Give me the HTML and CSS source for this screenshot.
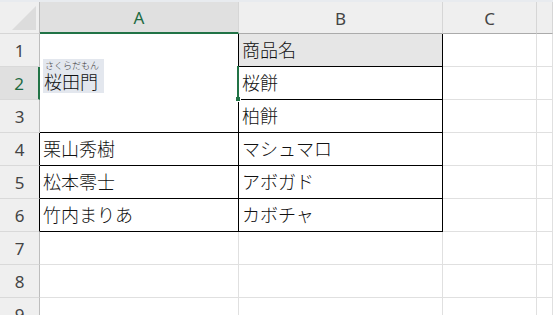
FILE: index.html
```html
<!DOCTYPE html>
<html lang="ja">
<head>
    <meta charset="UTF-8">
    <title>Sheet1</title>
    <link rel="stylesheet" href="styles.css">
</head>
<body>
    <div class="top-edge"></div>
    <div class="sheet">
        <!-- column headers -->
        <div class="corner">
            <svg width="39" height="31" viewBox="0 0 39 31"><polygon points="12,28 36,4 36,28" fill="#dcdcdc"/></svg>
        </div>
        <div class="col-head active">A</div>
        <div class="col-head">B</div>
        <div class="col-head">C</div>
        <div class="col-head"></div>

        <!-- row 1 -->
        <div class="row-head">1</div>
        <div class="cell merged">
            <div class="ruby-box">
                <span class="ruby">さくらだもん</span>
                <span class="base">桜田門</span>
            </div>
            <div class="sel-line"></div>
            <div class="fill-handle"></div>
        </div>
        <div class="cell boxed title">商品名</div>
        <div class="cell"></div>
        <div class="cell"></div>

        <!-- row 2 -->
        <div class="row-head active">2</div>
        <div class="cell boxed">桜餅</div>
        <div class="cell"></div>
        <div class="cell"></div>

        <!-- row 3 -->
        <div class="row-head">3</div>
        <div class="cell boxed">柏餅</div>
        <div class="cell"></div>
        <div class="cell"></div>

        <!-- row 4 -->
        <div class="row-head edge">4</div>
        <div class="cell boxed">栗山秀樹</div>
        <div class="cell boxed">マシュマロ</div>
        <div class="cell"></div>
        <div class="cell"></div>

        <!-- row 5 -->
        <div class="row-head edge">5</div>
        <div class="cell boxed">松本零士</div>
        <div class="cell boxed">アボガド</div>
        <div class="cell"></div>
        <div class="cell"></div>

        <!-- row 6 -->
        <div class="row-head edge">6</div>
        <div class="cell boxed">竹内まりあ</div>
        <div class="cell boxed">カボチャ</div>
        <div class="cell"></div>
        <div class="cell"></div>

        <!-- empty rows -->
        <div class="row-head">7</div>
        <div class="cell"></div><div class="cell"></div><div class="cell"></div><div class="cell"></div>
        <div class="row-head">8</div>
        <div class="cell"></div><div class="cell"></div><div class="cell"></div><div class="cell"></div>
        <div class="row-head">9</div>
        <div class="cell"></div><div class="cell"></div><div class="cell"></div><div class="cell"></div>
    </div>
</body>
</html>
```

FILE: styles.css
```css
* {
    margin: 0;
    padding: 0;
    box-sizing: border-box;
}
body {
    width: 553px;
    height: 315px;
    overflow: hidden;
    background: #fff;
    font-family: "Noto Sans CJK JP", "Noto Sans", sans-serif;
}

.top-edge {
    height: 2px;
    background: #e8ebef;
}

/* Grid */
.sheet {
    display: grid;
    grid-template-columns: 40px 199px 204px 94px 1fr;
    grid-template-rows: 32px repeat(9, 33px);
    height: 313px;
    overflow: hidden;
}

/* Headers */
.corner {
    background: #efefef;
    border-right: 1px solid #bdbdbd;
    border-bottom: 1px solid #d6d6d6;
}
.corner svg {
    display: block;
}
.col-head {
    display: flex;
    align-items: center;
    justify-content: center;
    background: #efefef;
    border-right: 1px solid #d6d6d6;
    border-bottom: 1px solid #ababab;
    font-family: "Noto Sans", sans-serif;
    font-size: 17px;
    color: #444;
    padding-top: 1px;
}
.col-head.active {
    background: #e0e0e0;
    color: #1e6b43;
    border-bottom: 2px solid #217346;
}
.row-head {
    display: flex;
    align-items: center;
    justify-content: center;
    background: #efefef;
    border-right: 1px solid #bdbdbd;
    border-bottom: 1px solid #d9d9d9;
    font-family: "Noto Sans", sans-serif;
    font-size: 17px;
    color: #444;
}
.row-head.active {
    background: #e0e0e0;
    color: #1e6b43;
    border-right: 2px solid #217346;
}
.row-head.edge {
    border-right-color: #000;
}

/* Cells */
.cell {
    display: flex;
    align-items: center;
    padding: 0 0 2px 3px;
    border-right: 1px solid #e0e0e0;
    border-bottom: 1px solid #e0e0e0;
    font-size: 18px;
    font-weight: 300;
    color: #111;
    white-space: nowrap;
}
.cell.boxed {
    border-right-color: #000;
    border-bottom-color: #000;
}
.cell.title {
    background: #e6e6e6;
}
.cell.merged {
    grid-row: span 3;
    position: relative;
    border-right-color: #000;
    border-bottom-color: #000;
    padding-bottom: 14px;
}

/* Phonetic guide */
.ruby-box {
    display: flex;
    flex-direction: column;
    background: #e3e7ee;
    padding: 0 5px 0 1px;
    line-height: 1;
}
.ruby {
    font-size: 9px;
    padding: 2px 0 2px 1px;
    color: #333;
}
.base {
    font-size: 18px;
    padding-bottom: 3px;
}

/* Selection marks */
.sel-line {
    position: absolute;
    top: 32px;
    right: -1px;
    width: 2px;
    height: 33px;
    background: #217346;
}
.fill-handle {
    position: absolute;
    top: 63px;
    right: -3px;
    width: 5px;
    height: 5px;
    background: #217346;
    border: 1px solid #fff;
    border-left: none;
    border-top: none;
}
```
